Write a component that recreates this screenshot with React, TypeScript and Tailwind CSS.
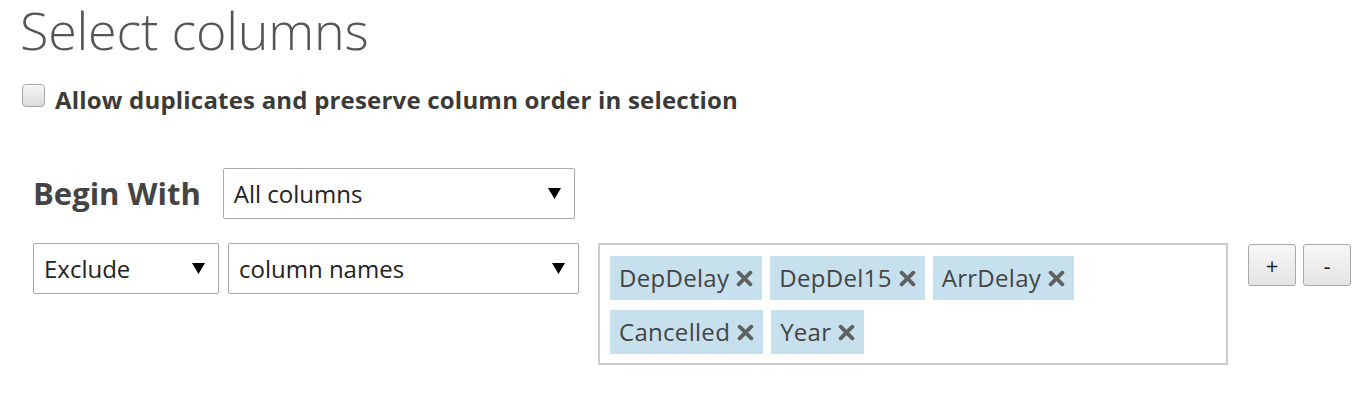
import React from "react";

const tags = ["DepDelay", "DepDel15", "ArrDelay", "Cancelled", "Year"];

function Caret() {
  return (
    <svg width="13" height="11" viewBox="0 0 13 11" className="shrink-0">
      <path d="M0 0 H13 L6.5 11 Z" fill="#000" />
    </svg>
  );
}

function Select({ label, width }: { label: string; width: string }) {
  return (
    <div
      className={`${width} h-[51px] flex items-center justify-between pl-[10px] pr-[13px] border border-[#a9a9a9] rounded-[2px] bg-white text-[24px] text-[#222]`}
    >
      <span>{label}</span>
      <Caret />
    </div>
  );
}

function Tag({ name }: { name: string }) {
  return (
    <div className="h-[44px] flex items-center gap-[7px] pl-[9px] pr-[9px] bg-[#c7e0ed] text-[24px] tracking-[0.3px] text-[#444]">
      <span>{name}</span>
      <svg width="17" height="17" viewBox="0 0 16 16">
        <path d="M2.5 2.5 L13.5 13.5 M13.5 2.5 L2.5 13.5" stroke="#606060" strokeWidth="3.6" strokeLinecap="round" />
      </svg>
    </div>
  );
}

export default function App() {
  return (
    <div className="w-[1360px] h-[418px] bg-white text-[#444] font-['Open_Sans',sans-serif] overflow-hidden">
      {/* Title */}
      <h1 className="pl-[20px] text-[52px] leading-[60px] font-light text-[#555] tracking-[-0.2px]">
        Select columns
      </h1>

      {/* Option */}
      <label className="flex items-start gap-[10px] pl-[22px] mt-[25px]">
        <span className="w-[23px] h-[23px] -mt-[1px] rounded-[4px] border border-[#a6a6a6] bg-gradient-to-b from-[#f4f4f4] to-[#dcdcdc] shadow-[inset_0_1px_0_#fff]" />
        <span className="text-[24px] font-bold text-[#3a3a3a] leading-[30px] tracking-[0.2px]">
          Allow duplicates and preserve column order in selection
        </span>
      </label>

      {/* Begin with */}
      <div className="flex items-center gap-[22px] pl-[33px] mt-[53px]">
        <span className="text-[31px] font-bold text-[#444]">Begin With</span>
        <Select label="All columns" width="w-[352px]" />
      </div>

      {/* Rule row */}
      <div className="flex items-start pl-[33px] mt-[24px]">
        <div className="flex gap-[9px]">
          <Select label="Exclude" width="w-[186px]" />
          <Select label="column names" width="w-[351px]" />
        </div>
        <div className="ml-[19px] w-[630px] h-[122px] border-2 border-[#cccccc] pl-[10px] pt-[11px] flex flex-wrap content-start gap-x-[8px] gap-y-[10px]">
          {tags.map((t) => (
            <Tag key={t} name={t} />
          ))}
        </div>
        <div className="flex gap-[7px] ml-[20px] mt-[1px]">
          {["+", "-"].map((s) => (
            <button
              key={s}
              className="w-[48px] h-[42px] rounded-[3px] border border-[#a8a8a8] bg-gradient-to-b from-[#f7f7f7] to-[#e3e3e3] text-[22px] text-[#222] flex items-center justify-center"
            >
              {s}
            </button>
          ))}
        </div>
      </div>
    </div>
  );
}
